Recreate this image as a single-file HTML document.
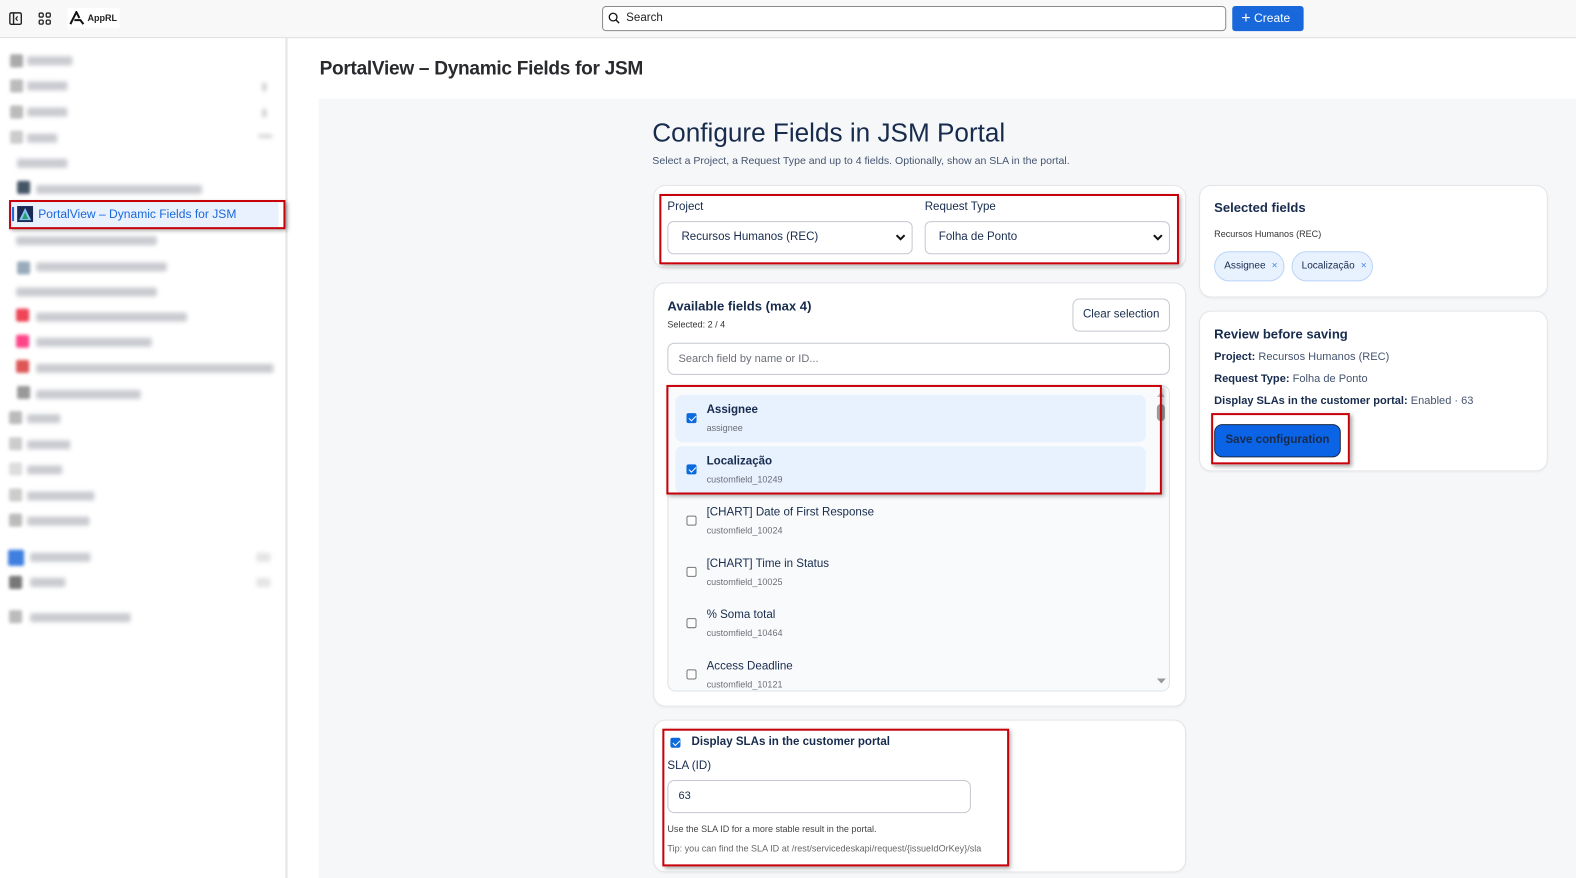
<!DOCTYPE html>
<html><head><meta charset="utf-8">
<style>
*{box-sizing:border-box;margin:0;padding:0}
html,body{width:1576px;height:878px;overflow:hidden;background:#fff}
body{font-family:"Liberation Sans",sans-serif;color:#172b4d;position:relative}
#w{position:absolute;left:0;top:0;width:1568px;height:874px;transform:scale(1.0051);transform-origin:0 0}
.a{position:absolute}
.top{left:0;top:0;width:1568px;height:38px;background:#f8f8f8;border-bottom:1px solid #ddd}
.side{left:0;top:38px;width:286px;height:840px;background:#fff;border-right:2px solid #e4e4e4}
.bl{position:absolute;height:9px;background:#c9cbd0;filter:blur(2px);border-radius:2px}
.ic{position:absolute;width:13px;height:13px;filter:blur(1.5px);border-radius:2px}
.panel{left:317px;top:98px;width:1252px;height:780px;background:#f6f7f9}
.card{position:absolute;background:#fff;border:1px solid #e3e5e8;border-radius:12px;box-shadow:0 1px 2px rgba(0,0,0,.04)}
.red{position:absolute;border:2px solid #c8000a;box-shadow:2px 2px 4px rgba(0,0,0,.35)}
.lbl{position:absolute;font-size:11.5px;color:#172b4d}
.sel{position:absolute;height:33px;border:1px solid #c4c8cf;border-radius:6px;background:#fff;font-size:11.5px;padding-left:13px;line-height:31px}
.sel svg{position:absolute;right:6px;top:11px}
.row{position:absolute;left:672px;width:468px;height:47px;border-radius:7px}
.row .t{position:absolute;left:31px;top:9px;font-size:11.5px;color:#172b4d}
.row .s{position:absolute;left:31px;top:28px;font-size:9px;color:#6b6f77}
.cb{position:absolute;left:11px;top:18px;width:10px;height:10px;border:1px solid #767676;border-radius:2px;background:#fff}
.cb.on{background:#0b6bdc;border-color:#0b6bdc}
.cb.on::after{content:"";position:absolute;left:2.5px;top:0px;width:3px;height:6px;border:solid #fff;border-width:0 1.5px 1.5px 0;transform:rotate(45deg)}
.chip{position:absolute;top:250px;height:30px;border:1px solid #b8d4f8;background:#e8f1fe;border-radius:15px;font-size:10px;line-height:28px;padding-left:9px;color:#172b4d}
.chip span{color:#4a86e0;margin-left:6px}
</style></head><body><div id="w">
<div class="a top"></div>
<svg class="a" style="left:9px;top:12px" width="13" height="13" viewBox="0 0 13 13"><rect x="0.8" y="0.8" width="11.4" height="11.4" rx="1.5" fill="none" stroke="#222" stroke-width="1.4"/><line x1="4.5" y1="1" x2="4.5" y2="12" stroke="#222" stroke-width="1.4"/><path d="M8.5 4.3 L6.8 6.5 L8.5 8.7" fill="none" stroke="#222" stroke-width="1.2"/></svg>
<svg class="a" style="left:38px;top:12px" width="13" height="13" viewBox="0 0 13 13"><g fill="none" stroke="#222" stroke-width="1.3"><rect x="1" y="1" width="4" height="4" rx="1.2"/><rect x="8" y="1" width="4" height="4" rx="1.2"/><rect x="1" y="8" width="4" height="4" rx="1.2"/><rect x="8" y="8" width="4" height="4" rx="1.2"/></g></svg>
<div class="a" style="left:67px;top:8px;width:52px;height:20px;background:#fff"></div>
<svg class="a" style="left:69px;top:11px" width="16" height="14" viewBox="0 0 16 14"><path d="M1 13 L7 1 L10 7 M5 9 L11 9 L14 13" fill="none" stroke="#111" stroke-width="2"/></svg>
<div class="a" style="left:87px;top:13px;font-size:9px;font-weight:bold;color:#222">AppRL</div>
<div class="a" style="left:599px;top:6px;width:621px;height:25px;border:1px solid #8a8a8a;border-radius:4px;background:#fff"></div>
<svg class="a" style="left:605px;top:12px" width="12" height="12" viewBox="0 0 12 12"><circle cx="5" cy="5" r="3.8" fill="none" stroke="#111" stroke-width="1.3"/><line x1="7.8" y1="7.8" x2="11" y2="11" stroke="#111" stroke-width="1.4"/></svg>
<div class="a" style="left:623px;top:12px;font-size:11.5px;color:#222">Search</div>
<div class="a" style="left:1226px;top:6px;width:71px;height:25px;background:#1868db;border-radius:3px;color:#fff;font-size:12px;line-height:25px;padding-left:9px"><span style="font-size:16px;vertical-align:-1px">+</span> Create</div>

<div class="a side">
<div class="ic" style="left:10px;top:16px;background:#aaa"></div><div class="bl" style="left:27px;top:18px;width:45px"></div>
<div class="ic" style="left:10px;top:41px;background:#bbb"></div><div class="bl" style="left:27px;top:43px;width:40px"></div><div class="bl" style="left:261px;top:44px;width:4px"></div>
<div class="ic" style="left:10px;top:67px;background:#bbb"></div><div class="bl" style="left:27px;top:69px;width:40px"></div><div class="bl" style="left:261px;top:70px;width:4px"></div>
<div class="ic" style="left:10px;top:92px;background:#ccc"></div><div class="bl" style="left:27px;top:95px;width:30px"></div><div class="bl" style="left:257px;top:96px;width:14px;height:3px"></div>
<div class="bl" style="left:17px;top:120px;width:50px"></div>
<div class="ic" style="left:17px;top:142px;background:#456"></div><div class="bl" style="left:36px;top:146px;width:165px"></div>
<div class="bl" style="left:16px;top:197px;width:140px"></div>
<div class="ic" style="left:17px;top:222px;background:#9ab"></div><div class="bl" style="left:36px;top:223px;width:130px"></div>
<div class="bl" style="left:16px;top:248px;width:140px"></div>
<div class="ic" style="left:16px;top:269px;background:#e45"></div><div class="bl" style="left:36px;top:273px;width:150px"></div>
<div class="ic" style="left:16px;top:295px;background:#f48"></div><div class="bl" style="left:36px;top:298px;width:115px"></div>
<div class="ic" style="left:16px;top:320px;background:#d55"></div><div class="bl" style="left:36px;top:324px;width:236px"></div>
<div class="ic" style="left:17px;top:346px;background:#999"></div><div class="bl" style="left:36px;top:350px;width:104px"></div>
<div class="ic" style="left:9px;top:371px;background:#bbb"></div><div class="bl" style="left:27px;top:374px;width:33px"></div>
<div class="ic" style="left:9px;top:397px;background:#ccc"></div><div class="bl" style="left:27px;top:400px;width:43px"></div>
<div class="ic" style="left:9px;top:422px;background:#ddd"></div><div class="bl" style="left:27px;top:425px;width:35px"></div>
<div class="ic" style="left:9px;top:448px;background:#ccc"></div><div class="bl" style="left:27px;top:451px;width:67px"></div>
<div class="ic" style="left:9px;top:473px;background:#bbb"></div><div class="bl" style="left:27px;top:476px;width:62px"></div>
<div class="ic" style="left:8px;top:509px;width:16px;height:16px;background:#3f7fe0"></div><div class="bl" style="left:30px;top:512px;width:60px"></div><div class="bl" style="left:255px;top:512px;width:14px;background:#e4e4e4"></div>
<div class="ic" style="left:9px;top:535px;background:#777"></div><div class="bl" style="left:30px;top:537px;width:35px"></div><div class="bl" style="left:255px;top:537px;width:14px;background:#e4e4e4"></div>
<div class="ic" style="left:9px;top:569px;background:#bbb"></div><div class="bl" style="left:30px;top:572px;width:100px"></div>
<div class="a" style="left:9px;top:161px;width:268px;height:28px;background:#e9f1fe"></div>
<div class="a" style="left:12px;top:168px;width:2px;height:14px;background:#1868db"></div>
<svg class="a" style="left:17px;top:167px" width="16" height="16" viewBox="0 0 16 16"><rect width="16" height="16" fill="#1b2a55"/><path d="M8 2 L14 14 L2 14 Z" fill="#7fc6f5"/><path d="M8 6 L11 13 L5 13 Z" fill="#2e9d6a"/></svg>
<div class="a" style="left:38px;top:168px;font-size:12px;color:#1868db">PortalView – Dynamic Fields for JSM</div>
</div>
<div class="red" style="left:9px;top:199px;width:275px;height:29px"></div>

<div class="a" style="left:318px;top:58px;font-size:19px;font-weight:bold;color:#292a2e;letter-spacing:-.3px">PortalView – Dynamic Fields for JSM</div>
<div class="a panel"></div>
<div class="a" style="left:649px;top:117px;font-size:26px;color:#172b4d">Configure Fields in JSM Portal</div>
<div class="a" style="left:649px;top:154px;font-size:10.5px;color:#44546f">Select a Project, a Request Type and up to 4 fields. Optionally, show an SLA in the portal.</div>

<div class="card" style="left:650px;top:184px;width:530px;height:83px"></div>
<div class="lbl" style="left:664px;top:200px">Project</div>
<div class="lbl" style="left:920px;top:200px">Request Type</div>
<div class="sel" style="left:664px;top:220px;width:244px">Recursos Humanos (REC)<svg width="10" height="8" viewBox="0 0 10 8"><path d="M1 2 L5 6 L9 2" fill="none" stroke="#111" stroke-width="2"/></svg></div>
<div class="sel" style="left:920px;top:220px;width:244px">Folha de Ponto<svg width="10" height="8" viewBox="0 0 10 8"><path d="M1 2 L5 6 L9 2" fill="none" stroke="#111" stroke-width="2"/></svg></div>
<div class="red" style="left:656px;top:193px;width:517px;height:70px"></div>

<div class="card" style="left:650px;top:281px;width:530px;height:422px"></div>
<div class="a" style="left:664px;top:297px;font-size:13px;font-weight:bold">Available fields (max 4)</div>
<div class="a" style="left:664px;top:318px;font-size:9px;color:#333">Selected: 2 / 4</div>
<div class="a" style="left:1067px;top:297px;width:97px;height:33px;border:1px solid #c4c8cf;border-radius:7px;background:#fff;font-size:11.5px;line-height:31px;text-align:center">Clear selection</div>
<div class="a" style="left:664px;top:341px;width:500px;height:32px;border:1px solid #c4c8cf;border-radius:7px;background:#fff;font-size:11px;color:#6b6f77;line-height:30px;padding-left:10px">Search field by name or ID...</div>
<div class="a" style="left:664px;top:383px;width:500px;height:305px;border:1px solid #dfe1e5;border-radius:8px;background:#f9fafb"></div>
<div class="a" style="left:1151px;top:402px;width:8px;height:17px;background:#9a9a9a;border-radius:4px"></div>
<svg class="a" style="left:1151px;top:389px" width="8" height="6"><path d="M0 6 L4 1 L8 6Z" fill="#bbb"/></svg>
<svg class="a" style="left:1151px;top:675px" width="9" height="6"><path d="M0 0 L4.5 5 L9 0Z" fill="#999"/></svg>
<div class="row" style="top:393px;background:#e8f1fe"><div class="cb on"></div><div class="t" style="font-weight:bold">Assignee</div><div class="s">assignee</div></div>
<div class="row" style="top:444px;background:#e8f1fe"><div class="cb on"></div><div class="t" style="font-weight:bold">Localização</div><div class="s">customfield_10249</div></div>
<div class="row" style="top:495px"><div class="cb"></div><div class="t">[CHART] Date of First Response</div><div class="s">customfield_10024</div></div>
<div class="row" style="top:546px"><div class="cb"></div><div class="t">[CHART] Time in Status</div><div class="s">customfield_10025</div></div>
<div class="row" style="top:597px"><div class="cb"></div><div class="t">% Soma total</div><div class="s">customfield_10464</div></div>
<div class="row" style="top:648px;height:38px;overflow:hidden"><div class="cb"></div><div class="t">Access Deadline</div><div class="s">customfield_10121</div></div>
<div class="red" style="left:663px;top:383px;width:493px;height:109px"></div>

<div class="card" style="left:650px;top:716px;width:530px;height:152px"></div>
<div class="cb on a" style="left:667px;top:734px"></div>
<div class="a" style="left:688px;top:732px;font-size:11.5px;font-weight:bold">Display SLAs in the customer portal</div>
<div class="a" style="left:664px;top:756px;font-size:11.5px">SLA (ID)</div>
<div class="a" style="left:664px;top:776px;width:302px;height:33px;border:1px solid #c4c8cf;border-radius:7px;background:#fff;font-size:11px;line-height:31px;padding-left:10px">63</div>
<div class="a" style="left:664px;top:820px;font-size:9px;color:#444">Use the SLA ID for a more stable result in the portal.</div>
<div class="a" style="left:664px;top:839px;font-size:9px;color:#666">Tip: you can find the SLA ID at /rest/servicedeskapi/request/{issueIdOrKey}/sla</div>
<div class="red" style="left:659px;top:725px;width:345px;height:137px"></div>

<div class="card" style="left:1193px;top:184px;width:347px;height:112px"></div>
<div class="a" style="left:1208px;top:199px;font-size:13px;font-weight:bold">Selected fields</div>
<div class="a" style="left:1208px;top:228px;font-size:9px;color:#333">Recursos Humanos (REC)</div>
<div class="chip" style="left:1208px;width:70px">Assignee<span>×</span></div>
<div class="chip" style="left:1285px;width:81px">Localização<span>×</span></div>

<div class="card" style="left:1193px;top:309px;width:347px;height:160px"></div>
<div class="a" style="left:1208px;top:325px;font-size:13px;font-weight:bold">Review before saving</div>
<div class="a" style="left:1208px;top:349px;font-size:11px;color:#44546f"><b style="color:#172b4d">Project:</b> Recursos Humanos (REC)</div>
<div class="a" style="left:1208px;top:371px;font-size:11px;color:#44546f"><b style="color:#172b4d">Request Type:</b> Folha de Ponto</div>
<div class="a" style="left:1208px;top:393px;font-size:11px;color:#44546f"><b style="color:#172b4d">Display SLAs in the customer portal:</b> Enabled · 63</div>
<div class="a" style="left:1208px;top:422px;width:126px;height:33px;background:#0b63e5;border:1px solid #1a2a44;border-radius:8px;font-size:11.5px;font-weight:bold;color:#1a2b4a;text-align:center;line-height:31px">Save configuration</div>
<div class="red" style="left:1205px;top:411px;width:138px;height:51px"></div>
</div></body></html>
